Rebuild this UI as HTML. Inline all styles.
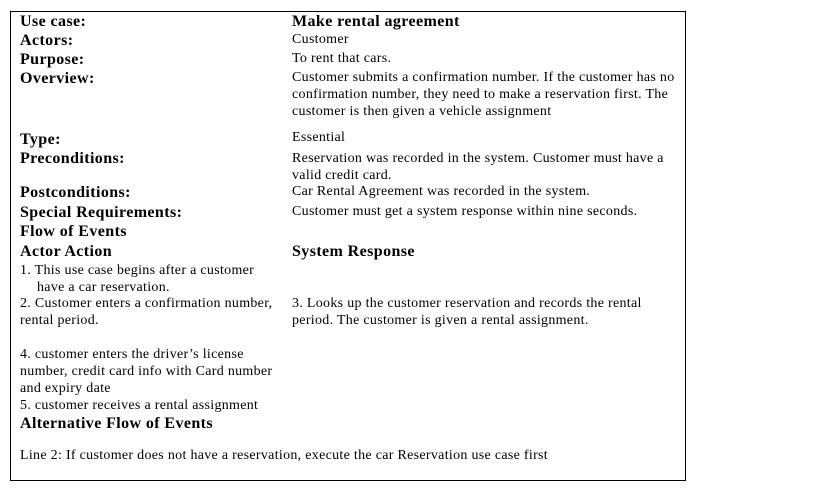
<!DOCTYPE html><html><head><style>
body{margin:0;width:819px;height:502px;background:#fff;position:relative;font-family:"Liberation Serif",serif;color:#000;overflow:hidden}
.box{position:absolute;left:10px;top:11px;width:674px;height:468px;border:1px solid #000}
.b,.n{position:absolute;white-space:nowrap}
.b{font-weight:bold;font-size:16px;line-height:18px;letter-spacing:0.4px;margin-top:1px}
.n{font-size:14px;line-height:16px;letter-spacing:0.3px;margin-top:2px}
</style></head><body>
<div class="box"></div>
<div class="b" style="left:20px;top:12px">Use case:</div>
<div class="b" style="left:20px;top:31px">Actors:</div>
<div class="b" style="left:20px;top:50px">Purpose:</div>
<div class="b" style="left:20px;top:69px">Overview:</div>
<div class="b" style="left:20px;top:130px">Type:</div>
<div class="b" style="left:20px;top:149px">Preconditions:</div>
<div class="b" style="left:20px;top:183px">Postconditions:</div>
<div class="b" style="left:20px;top:203px">Special Requirements:</div>
<div class="b" style="left:20px;top:222px">Flow of Events</div>
<div class="b" style="left:20px;top:242px">Actor Action</div>
<div class="b" style="left:292px;top:12px">Make rental agreement</div>
<div class="b" style="left:292px;top:242px">System Response</div>
<div class="n" style="left:292px;top:30px">Customer</div>
<div class="n" style="left:292px;top:49px">To rent that cars.</div>
<div class="n" style="left:292px;top:68px">Customer submits a confirmation number. If the customer has no</div>
<div class="n" style="left:292px;top:85px">confirmation number, they need to make a reservation first. The</div>
<div class="n" style="left:292px;top:102px">customer is then given a vehicle assignment</div>
<div class="n" style="left:292px;top:128px">Essential</div>
<div class="n" style="left:292px;top:149px">Reservation was recorded in the system. Customer must have a</div>
<div class="n" style="left:292px;top:166px">valid credit card.</div>
<div class="n" style="left:292px;top:182px">Car Rental Agreement was recorded in the system.</div>
<div class="n" style="left:292px;top:202px">Customer must get a system response within nine seconds.</div>
<div class="n" style="left:20px;top:261px">1. This use case begins after a customer</div>
<div class="n" style="left:37px;top:278px">have a car reservation.</div>
<div class="n" style="left:20px;top:294px">2. Customer enters a confirmation number,</div>
<div class="n" style="left:20px;top:311px">rental period.</div>
<div class="n" style="left:292px;top:294px">3. Looks up the customer reservation and records the rental</div>
<div class="n" style="left:292px;top:311px">period. The customer is given a rental assignment.</div>
<div class="n" style="left:20px;top:345px">4. customer enters the driver’s license</div>
<div class="n" style="left:20px;top:362px">number, credit card info with Card number</div>
<div class="n" style="left:20px;top:379px">and expiry date</div>
<div class="n" style="left:20px;top:396px">5. customer receives a rental assignment</div>
<div class="b" style="left:20px;top:414px">Alternative Flow of Events</div>
<div class="n" style="left:20px;top:446px">Line 2: If customer does not have a reservation, execute the car Reservation use case first</div>
</body></html>
